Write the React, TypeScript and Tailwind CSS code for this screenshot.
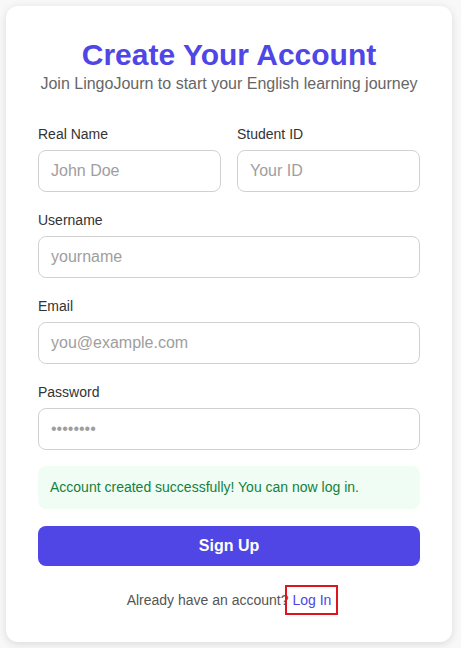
import React from "react";

function Field({ label, placeholder, type = "text" }: { label: string; placeholder: string; type?: string }) {
  return (
    <div className="flex flex-col">
      <label className="block pt-px text-[14px] leading-5 text-[#333] mb-[6px]">{label}</label>
      <input
        type={type}
        placeholder={placeholder}
        className="h-[42px] w-full rounded-lg border border-[#d1d1d1] bg-white px-3 text-[16px] text-[#333] placeholder:text-[#9e9e9e] outline-none"
      />
    </div>
  );
}

export default function App() {
  return (
    <div
      className="min-h-[648px] w-full bg-[#f8f8f8] p-[6px]"
      style={{ fontFamily: '"Liberation Sans", Arial, sans-serif' }}
    >
      <div className="w-[446px] rounded-xl bg-white px-8 pt-8 pb-8 shadow-[0_2px_8px_rgba(0,0,0,0.12)]">
        <div className="mb-[27px] text-center">
          <h1 className="text-[30px] font-bold leading-[34px] text-[#4f46e5]">Create Your Account</h1>
          <p className="text-[16px] leading-6 text-[#666]">Join LingoJourn to start your English learning journey</p>
        </div>
        <form className="flex flex-col gap-[17px]" onSubmit={(e) => e.preventDefault()}>
          <div className="grid grid-cols-2 gap-4">
            <Field label="Real Name" placeholder="John Doe" />
            <Field label="Student ID" placeholder="Your ID" />
          </div>
          <Field label="Username" placeholder="yourname" />
          <Field label="Email" placeholder="you@example.com" type="email" />
          <div className="mb-[-1px]">
            <Field label="Password" placeholder="••••••••" type="password" />
          </div>
          <div className="rounded-lg bg-[#f0fdf4] px-3 py-3 text-[14px] leading-[19px] text-[#15803d]">
            Account created successfully! You can now log in.
          </div>
          <button
            type="submit"
            className="h-10 w-full rounded-lg bg-[#4f46e5] text-[16px] font-bold text-white"
          >
            Sign Up
          </button>
        </form>
        <p className="mt-6 text-center text-[14px] leading-5 text-[#555]">
          Already have an account?{" "}
          <a href="#" className="text-[#4f46e5] outline-2 outline-offset-[5px] outline-[#e0141e] outline">
            Log In
          </a>
        </p>
      </div>
    </div>
  );
}
